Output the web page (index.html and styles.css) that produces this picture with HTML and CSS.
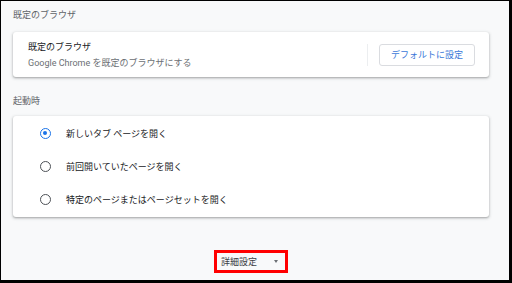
FILE: index.html
```html
<!DOCTYPE html>
<html lang="ja">
<head>
  <meta charset="UTF-8">
  <title>設定</title>
  <link rel="stylesheet" href="styles.css">
</head>
<body>
  <div class="frame">
    <div class="page">
      <div class="section-title">既定のブラウザ</div>
      <div class="card browser-card">
        <div class="browser-text">
          <div class="item-title">既定のブラウザ</div>
          <div class="item-sub">Google Chrome を既定のブラウザにする</div>
        </div>
        <div class="sep"></div>
        <button class="btn">デフォルトに設定</button>
      </div>

      <div class="section-title startup">起動時</div>
      <div class="card radio-card">
        <div class="radio-row">
          <span class="radio checked"></span>
          <span class="radio-label">新しいタブ ページを開く</span>
        </div>
        <div class="radio-row">
          <span class="radio"></span>
          <span class="radio-label">前回開いていたページを開く</span>
        </div>
        <div class="radio-row">
          <span class="radio"></span>
          <span class="radio-label">特定のページまたはページセットを開く</span>
        </div>
      </div>

      <div class="advanced-wrap">
        <div class="advanced">
          <span class="advanced-label">詳細設定</span>
          <span class="arrow"></span>
        </div>
      </div>
    </div>
  </div>
</body>
</html>
```

FILE: styles.css
```css
body {
  margin: 0;
  font-family: Roboto, "Noto Sans CJK JP", sans-serif;
  font-size: 9px;
  color: #202124;
}
.frame {
  width: 512px;
  height: 283px;
  box-sizing: border-box;
  border: 1px solid #000;
  border-right-width: 3px;
  border-bottom-width: 3px;
  background: #f8f9fa;
  overflow: hidden;
}
.page { padding: 7px 20px 0 12px; }
.section-title {
  line-height: 14px;
  color: #5f6368;
  margin-bottom: 10px;
}
.section-title.startup { margin-top: 17px; margin-bottom: 8px; }
.card {
  background: #fff;
  border-radius: 3px;
  box-shadow: 0 1px 2px rgba(60,64,67,.35), 0 1px 3px 1px rgba(60,64,67,.12);
}
.browser-card {
  display: flex;
  align-items: center;
  height: 45px;
  padding: 0 14px 0 15px;
}
.browser-text { flex: 1; padding-top: 1px; }
.item-title { line-height: 14px; margin-bottom: 2px; }
.item-sub { line-height: 14px; color: #6b6f74; }
.sep {
  width: 1px;
  height: 22px;
  background: #eceef0;
  margin-right: 11px;
}
.btn {
  width: 96px;
  height: 22px;
  border: 1px solid #dadce0;
  border-radius: 3px;
  background: #fff;
  color: #3b78d8;
  font-family: inherit;
  font-size: 9px;
  padding: 0;
}
.radio-card { padding: 1px 0; }
.radio-row {
  display: flex;
  align-items: center;
  height: 33px;
  padding-left: 27px;
}
.radio {
  width: 11px;
  height: 11px;
  box-sizing: border-box;
  border: 1.6px solid #4d5156;
  border-radius: 50%;
  margin-right: 15px;
  position: relative;
}
.radio.checked { border-color: #1a73e8; }
.radio.checked::after {
  content: "";
  position: absolute;
  left: 1.7px;
  top: 1.7px;
  width: 4.5px;
  height: 4.5px;
  border-radius: 50%;
  background: #1a73e8;
}
.advanced-wrap {
  display: flex;
  justify-content: center;
  margin-top: 33px;
}
.advanced {
  display: flex;
  align-items: center;
  width: 74px;
  height: 23px;
  box-sizing: border-box;
  border: 3px solid #f00;
  padding-left: 4px;
}
.advanced-label { color: #3c4043; line-height: 14px; }
.arrow {
  margin-left: 17px;
  width: 0;
  height: 0;
  border-left: 2.5px solid transparent;
  border-right: 2.5px solid transparent;
  border-top: 3px solid #6b6f74;
}
```
